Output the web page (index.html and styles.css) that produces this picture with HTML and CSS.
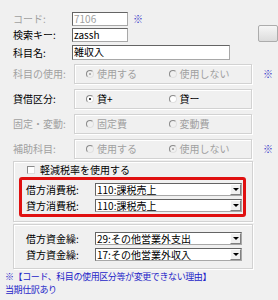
FILE: index.html
```html
<!DOCTYPE html>
<html lang="ja">
<head>
  <meta charset="UTF-8">
  <meta name="viewport" content="width=device-width, initial-scale=1.0">
  <title>科目設定</title>
  <link rel="stylesheet" href="styles.css">
</head>
<body>

  <div class="form">
    <!-- Code, key and name -->
    <div class="top">
      <div class="fields">
        <div class="row">
          <span class="label muted">コード:</span>
          <span class="text-box short muted">7106</span>
          <span class="note">※</span>
        </div>
        <div class="row">
          <span class="label">検索キー:</span>
          <span class="text-box short">zassh</span>
        </div>
        <div class="row row-name">
          <span class="label">科目名:</span>
          <span class="text-box long">雑収入</span>
        </div>
      </div>
      <div class="side">
        <span class="side-button"></span>
      </div>
    </div>

    <!-- Radio options -->
    <div class="options">
      <div class="option-row">
        <span class="label muted">科目の使用:</span>
        <div class="radio-box muted">
          <span class="radio-item"><span class="radio checked"></span>使用する</span>
          <span class="radio-item"><span class="radio"></span>使用しない</span>
        </div>
        <span class="note">※</span>
      </div>
      <div class="option-row">
        <span class="label">貸借区分:</span>
        <div class="radio-box">
          <span class="radio-item"><span class="radio checked"></span>貸+</span>
          <span class="radio-item"><span class="radio"></span>貸ー</span>
        </div>
      </div>
      <div class="option-row">
        <span class="label muted">固定・変動:</span>
        <div class="radio-box muted">
          <span class="radio-item"><span class="radio"></span>固定費</span>
          <span class="radio-item"><span class="radio"></span>変動費</span>
        </div>
      </div>
      <div class="option-row">
        <span class="label muted">補助科目:</span>
        <div class="radio-box muted">
          <span class="radio-item"><span class="radio"></span>使用する</span>
          <span class="radio-item"><span class="radio checked"></span>使用しない</span>
        </div>
        <span class="note">※</span>
      </div>
    </div>

    <!-- Tax -->
    <div class="group tax-group">
      <div class="check-row"><span class="checkbox"></span>軽減税率を使用する</div>
      <div class="highlight">
        <div class="select-row">
          <span class="select-label">借方消費税:</span>
          <span class="select"><span class="select-text">110:課税売上</span><span class="drop"></span></span>
        </div>
        <div class="select-row">
          <span class="select-label">貸方消費税:</span>
          <span class="select"><span class="select-text">110:課税売上</span><span class="drop"></span></span>
        </div>
      </div>
    </div>

    <!-- Cash flow -->
    <div class="group cash-group">
      <div class="select-row">
        <span class="select-label">借方資金繰:</span>
        <span class="select"><span class="select-text">29:その他営業外支出</span><span class="drop"></span></span>
      </div>
      <div class="select-row">
        <span class="select-label">貸方資金繰:</span>
        <span class="select"><span class="select-text">17:その他営業外収入</span><span class="drop"></span></span>
      </div>
    </div>

    <p class="reason">※【コード、科目の使用区分等が変更できない理由】<br>当期仕訳あり</p>
  </div>

</body>
</html>
```

FILE: styles.css
```css
/* General Styles */
body {
  margin: 0;
  background-color: #f0f0f0;
  font-family: 'Noto Sans CJK JP', 'Liberation Sans', sans-serif;
  font-size: 10px;
  line-height: 12px;
  color: #000;
  overflow: hidden;
}

.form {
  width: 278px;
  height: 300px;
  overflow: hidden;
}

.muted {
  color: #a0a0a0;
}

.note {
  color: #3838c8;
  font-size: 10px;
}

/* Top fields */
.top {
  display: flex;
  padding-top: 12px;
}

.fields {
  display: flex;
  flex-direction: column;
  gap: 2px;
  width: 263px;
}

.row {
  display: flex;
  align-items: center;
  height: 14px;
}

.row-name {
  margin-top: 1px;
  height: 15px;
}

.label {
  width: 59px;
  padding-left: 13px;
  flex-shrink: 0;
}

.text-box {
  box-sizing: border-box;
  height: 100%;
  background-color: #fff;
  border: 1px solid #a8a8a8;
  border-top-color: #646464;
  border-left-color: #646464;
  padding-left: 1px;
  line-height: 12px;
}

.text-box.short {
  width: 56px;
}

.text-box.long {
  width: 158px;
}

.row .note {
  margin-left: 5px;
}

.side {
  padding-top: 13px;
}

.side-button {
  display: block;
  width: 20px;
  height: 17px;
  box-sizing: border-box;
  border: 1px solid #acacac;
  border-radius: 2px;
  background: linear-gradient(#f6f6f6, #dcdcdc);
}

/* Radio options */
.options {
  display: flex;
  flex-direction: column;
  gap: 5px;
  margin-top: 4px;
}

.option-row {
  display: flex;
  align-items: center;
}

.option-row .label {
  width: 61px;
}

.radio-box {
  box-sizing: border-box;
  display: flex;
  align-items: center;
  width: 178px;
  height: 20px;
  border: 1px solid #d2d2d2;
  box-shadow: inset 1px 1px 0 #fff, 1px 1px 0 #fff;
  padding-left: 11px;
}

.radio-item {
  display: flex;
  align-items: center;
  gap: 3px;
  width: 84px;
}

.radio {
  box-sizing: border-box;
  width: 8px;
  height: 8px;
  border-radius: 50%;
  border: 1px solid #8a8a8a;
  border-right-color: #e0e0e0;
  border-bottom-color: #e0e0e0;
  background-color: #fff;
  display: flex;
  align-items: center;
  justify-content: center;
}

.muted .radio {
  background-color: #f0f0f0;
}

.radio.checked::after {
  content: "";
  width: 2px;
  height: 2px;
  border-radius: 50%;
  background-color: #000;
}

.muted .radio.checked::after {
  background-color: #a0a0a0;
}

.option-row .note {
  margin-left: 11px;
}

/* Group boxes */
.group {
  box-sizing: border-box;
  width: 240px;
  margin-left: 13px;
  border: 1px solid #d2d2d2;
  box-shadow: inset 1px 1px 0 #fff, 1px 1px 0 #fff;
}

.tax-group {
  margin-top: 2px;
  padding: 3px 6px 4px 5px;
}

.check-row {
  display: flex;
  align-items: center;
  gap: 5px;
  padding-left: 8px;
  height: 10px;
  margin-bottom: 2px;
}

.checkbox {
  box-sizing: border-box;
  width: 8px;
  height: 8px;
  border: 1px solid #8a8a8a;
  border-right-color: #e0e0e0;
  border-bottom-color: #e0e0e0;
  background-color: #fff;
}

.highlight {
  border: 3px solid #e01010;
  border-radius: 3px;
  padding: 3px 1px 2px 4px;
  display: flex;
  flex-direction: column;
  gap: 3px;
}

.cash-group {
  margin-top: 2px;
  padding: 7px 10px 7px 12px;
  display: flex;
  flex-direction: column;
  gap: 3px;
}

.select-row {
  display: flex;
  align-items: center;
  height: 13px;
}

.select-label {
  width: 69px;
  flex-shrink: 0;
}

.select {
  box-sizing: border-box;
  display: flex;
  align-items: center;
  width: 147px;
  height: 13px;
  background-color: #fff;
  border: 1px solid #a8a8a8;
  border-top-color: #646464;
  border-left-color: #646464;
}

.select-text {
  flex: 1;
  padding-left: 1px;
  white-space: nowrap;
}

.drop {
  box-sizing: border-box;
  width: 11px;
  height: 11px;
  background-color: #f0f0f0;
  border: 1px solid #fff;
  border-right-color: #808080;
  border-bottom-color: #808080;
  display: flex;
  align-items: center;
  justify-content: center;
}

.drop::after {
  content: "";
  border-left: 3px solid transparent;
  border-right: 3px solid transparent;
  border-top: 3px solid #000;
}

.reason {
  margin: 1px 0 0 5px;
  color: #2424c8;
  font-size: 9px;
  line-height: 13px;
  letter-spacing: -0.4px;
}
```
